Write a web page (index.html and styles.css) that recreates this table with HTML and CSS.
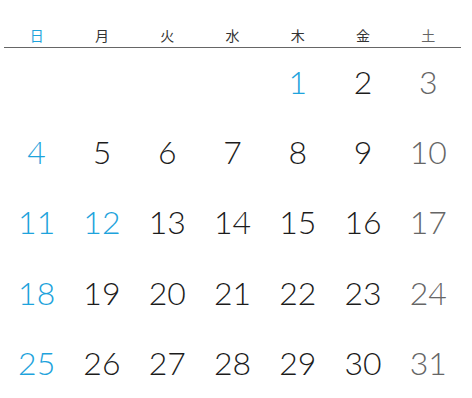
FILE: index.html
```html
<!DOCTYPE html>
<html lang="ja">
<head>
<meta charset="utf-8">
<link rel="stylesheet" href="styles.css">
</head>
<body>
<div class="calendar">
  <div class="week head">
    <div class="sun">日</div><div>月</div><div>火</div><div>水</div><div>木</div><div>金</div><div class="sat">土</div>
  </div>
  <div class="days">
    <div></div><div></div><div></div><div></div>
    <div class="sun">1</div><div>2</div><div class="sat">3</div>
    <div class="sun">4</div><div>5</div><div>6</div><div>7</div><div>8</div><div>9</div><div class="sat">10</div>
    <div class="sun">11</div><div class="sun">12</div><div>13</div><div>14</div><div>15</div><div>16</div><div class="sat">17</div>
    <div class="sun">18</div><div>19</div><div>20</div><div>21</div><div>22</div><div>23</div><div class="sat">24</div>
    <div class="sun">25</div><div>26</div><div>27</div><div>28</div><div>29</div><div>30</div><div class="sat">31</div>
  </div>
</div>
</body>
</html>
```
FILE: styles.css
```css
html, body {
  margin: 0;
  padding: 0;
  background: #fff;
}
.calendar {
  width: 457px;
  margin-left: 4px;
}
.week {
  display: grid;
  grid-template-columns: repeat(7, 1fr);
}
.head {
  padding-top: 26px;
  height: 21px;
  border-bottom: 1px solid #666;
  font-family: "Noto Sans CJK JP", sans-serif;
  font-size: 14px;
  line-height: 18px;
  color: #333;
  text-align: center;
}
.days {
  display: grid;
  grid-template-columns: repeat(7, 1fr);
  grid-auto-rows: 70.3px;
  font-family: Lato, sans-serif;
  font-weight: 300;
  font-size: 32px;
  color: #1c1c1c;
}
.days > div {
  display: flex;
  align-items: center;
  justify-content: center;
  padding-bottom: 4px;
}
.sun { color: #1ea3dc; }
.sat { color: #666; }
```
